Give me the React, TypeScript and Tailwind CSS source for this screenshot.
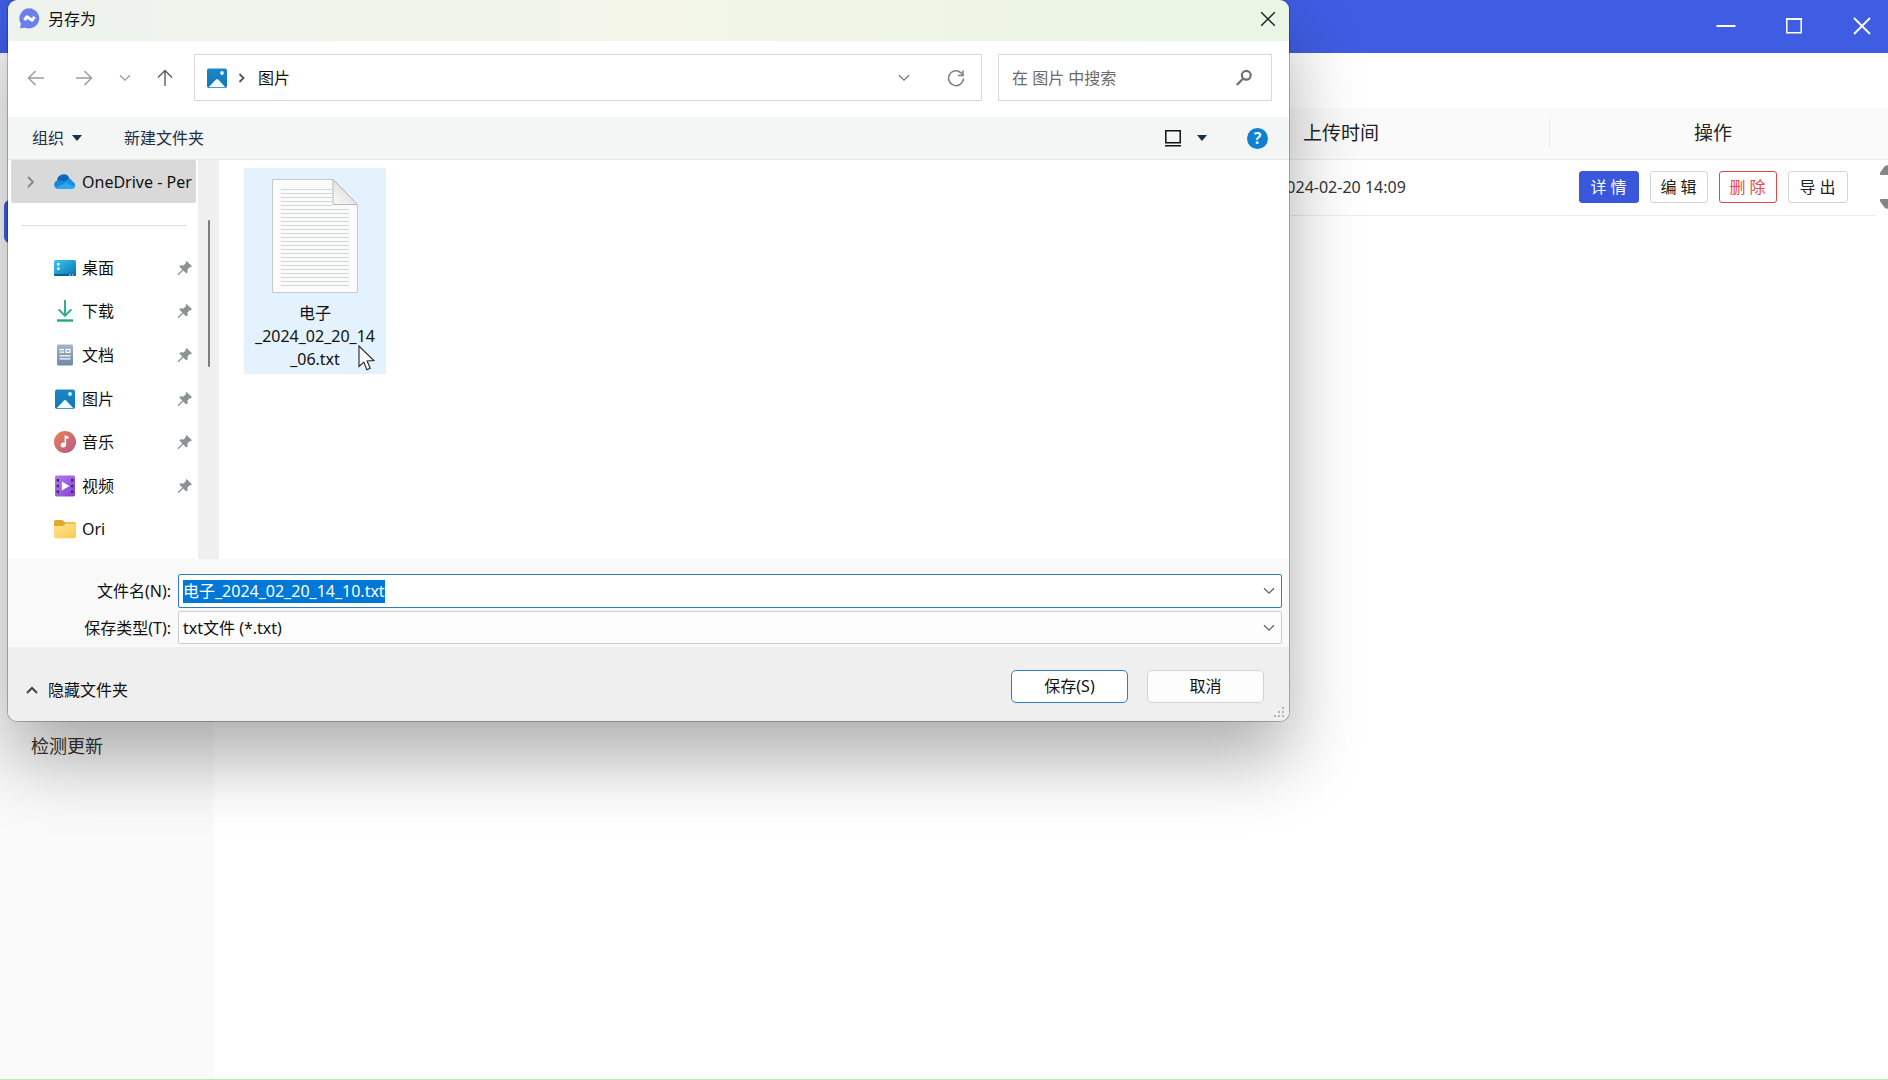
import { useEffect, useRef } from "react";
import type { ReactNode } from "react";

function DesktopIcon() {
  return (
    <svg aria-hidden width="22" height="22" viewBox="0 0 22 22">
      <defs>
        <linearGradient id="desktop" x1="0" y1="0" x2="1" y2="1">
          <stop offset="0" stopColor="#3cc8ec" />
          <stop offset="1" stopColor="#0c6fb4" />
        </linearGradient>
      </defs>
      <rect x="0" y="3" width="22" height="16" rx="1.5" fill="url(#desktop)" />
      <path d="M0 17h22v.8a1.4 1.4 0 0 1-1.4 1.2H1.4A1.4 1.4 0 0 1 0 17.8z" fill="#0f5f95" />
      <path d="M3 6h2.6v2.6H3zM3 10.4h2.6V13H3z" fill="#d9f6ff" />
      <path d="M15 17.4h1.6v1H15zM18 17.4h1.6v1H18z" fill="#d9f6ff" />
    </svg>
  );
}

function DownloadIcon() {
  return (
    <svg aria-hidden width="22" height="22" viewBox="0 0 22 22" fill="none" stroke="#2fae90" strokeWidth="2">
      <path d="M11 0v15.5M4.6 9.4L11 15.8l6.4-6.4" />
      <path d="M3 20.5h16" stroke="#23a884" strokeWidth="2.4" />
    </svg>
  );
}

function DocumentIcon() {
  return (
    <svg aria-hidden width="22" height="22" viewBox="0 0 22 22">
      <defs>
        <linearGradient id="document" x1="0" y1="0" x2="0" y2="1">
          <stop offset="0" stopColor="#a3b5cb" />
          <stop offset="1" stopColor="#7288a8" />
        </linearGradient>
      </defs>
      <rect x="3" y="0.5" width="16" height="21" rx="1.5" fill="url(#document)" />
      <path d="M5.5 5H10v1.3H5.5zM5.5 7.5H10v1.3H5.5zM5.5 11.2h11v1.3h-11zM5.5 14.2h11v1.3h-11z" fill="#fff" />
      <path d="M11.5 4.8h5v4.2h-5z" fill="#fff" />
      <path d="M12.7 6h2.6v1.8h-2.6z" fill="#8ea3bd" />
    </svg>
  );
}

function PictureIcon() {
  return (
    <svg aria-hidden width="22" height="22" viewBox="0 0 22 22">
      <defs>
        <linearGradient id="picture" x1="0" y1="0" x2="0" y2="1">
          <stop offset="0" stopColor="#1b86c6" />
          <stop offset="1" stopColor="#1278b8" />
        </linearGradient>
      </defs>
      <rect x="1" y="1.5" width="20" height="19.5" rx="2" fill="url(#picture)" />
      <path d="M2.6 20.2l7.4-7.6q1.1-1 2.2 0l7.2 7.6z" fill="#f2fbff" />
      <circle cx="16" cy="6" r="1.9" fill="#d8f1fc" />
    </svg>
  );
}

function MusicIcon() {
  return (
    <svg aria-hidden width="22" height="22" viewBox="0 0 22 22">
      <defs>
        <linearGradient id="music" x1="0" y1="0" x2="1" y2="1">
          <stop offset="0" stopColor="#ea8450" />
          <stop offset="1" stopColor="#b4588e" />
        </linearGradient>
      </defs>
      <circle cx="11" cy="11" r="11" fill="url(#music)" />
      <path d="M10.6 4.2l3.9 1.3v2.3l-2.4-.6v6.9a2.7 2.5 0 1 1-1.5-2.3z" fill="#fff" />
    </svg>
  );
}

function VideoIcon() {
  return (
    <svg aria-hidden width="22" height="22" viewBox="0 0 22 22">
      <defs>
        <linearGradient id="video" x1="0" y1="0" x2="1" y2="1">
          <stop offset="0" stopColor="#b07cf0" />
          <stop offset="1" stopColor="#8345cc" />
        </linearGradient>
      </defs>
      <rect x="1" y="0.5" width="20" height="21" rx="1.8" fill="url(#video)" />
      <path
        d="M2.6 4h2.4v2.4H2.6zM2.6 9.8h2.4v2.4H2.6zM2.6 15.6h2.4V18H2.6zM17 4h2.4v2.4H17zM17 9.8h2.4v2.4H17zM17 15.6h2.4V18H17z"
        fill="#4a2382"
      />
      <path d="M7.8 6.4v9.2l7.6-4.6z" fill="#fff" />
    </svg>
  );
}

function FolderIcon() {
  return (
    <svg aria-hidden width="22" height="22" viewBox="0 0 22 22">
      <defs>
        <linearGradient id="folder" x1="0" y1="0" x2="1" y2="1">
          <stop offset="0" stopColor="#ffe38c" />
          <stop offset="1" stopColor="#f9cc52" />
        </linearGradient>
      </defs>
      <path d="M0 3.6A1.6 1.6 0 0 1 1.6 2h6.2q.7 0 1.2.5L11 4.3h9.4A1.6 1.6 0 0 1 22 5.9V10H0z" fill="#dfa92c" />
      <path d="M0 8h8.6q.7 0 1.2-.5L11.4 5.6h9.2A1.4 1.4 0 0 1 22 7v11.6a1.6 1.6 0 0 1-1.6 1.6H1.6A1.6 1.6 0 0 1 0 18.6z" fill="url(#folder)" />
    </svg>
  );
}

function CloudIcon() {
  return (
    <svg aria-hidden width="22" height="22" viewBox="0 0 22 22">
      <path d="M3 9.5a6.5 6.5 0 0 1 12.6-1.9L10 13z" fill="#0f66b8" />
      <path d="M4.2 18A4.3 4.3 0 0 1 5 9.3q2.6-.5 4.6 1.3L18 17.2 14 18z" fill="#1a86d8" />
      <path d="M8.8 11.2l6-3.6a5 5 0 0 1 3.8 3A4 4 0 0 1 20.8 16L15 15z" fill="#1b90e0" />
      <path d="M4.2 18q-1.6 0-2.8-1.2l9.4-4.6q1.4-.8 2.8.1L21 16.6Q19.9 18 18.2 18z" fill="#2ba8ee" />
    </svg>
  );
}

function PinIcon() {
  return (
    <svg aria-hidden width="16" height="16" viewBox="0 0 16 16" fill="#8b9296">
      <path d="M9.6 1l5.4 5.3-1.5 1-.8-.1-2.2 2.3.2 2.8-1.4 1.3L6.2 10.5l-4.4 4.6-1-.1.1-1L5.4 9.6 2.3 6.5l1.3-1.3 2.9.2 2.3-2.2-.1-1z" />
    </svg>
  );
}

function AppLogo() {
  return (
    <svg aria-hidden width="21" height="21" viewBox="0 0 21 21">
      <path d="M10.5.3a10.100 10.100 0 1 1-4.300 19.400L1 20.300l.9-4.600A10.100 10.100 0 0 1 10.500.3z" fill="#6c80ec" />
      <path d="M5.400 12.200l2.400-3.400 5.400 3.400 2.400-3.400" fill="none" stroke="#fff" strokeWidth="3" strokeLinejoin="round" />
    </svg>
  );
}

function TextFileIcon() {
  const lines = Array.from({ length: 25 }, (_, index) => 10 + index * 4);

  return (
    <svg aria-hidden width="86" height="114" viewBox="0 0 86 114">
      <defs>
        <linearGradient id="fold" x1="0" y1="1" x2="1" y2="0">
          <stop offset="0" stopColor="#fbfbfb" />
          <stop offset="1" stopColor="#cfcfcf" />
        </linearGradient>
      </defs>
      <path d="M.5.5h60.5l24.5 25v88H.5z" fill="#fafbfa" stroke="#c3c8cb" />
      <g stroke="#d2d6d4">
        {lines.map((y) => (
          <path key={y} d={`M9 ${y}.5H${y < 28 ? 60 : 77}`} />
        ))}
      </g>
      <path d="M61 .5v25h24.5z" fill="url(#fold)" stroke="#b4b8ba" />
    </svg>
  );
}

function Chevron({ className }: { className?: string }) {
  return (
    <svg aria-hidden width="12" height="8" viewBox="0 0 12 8" fill="none" stroke="currentColor" strokeWidth="1.3" className={className}>
      <path d="M1 1.2l5 5 5-5" />
    </svg>
  );
}

function Triangle() {
  return (
    <svg aria-hidden width="10" height="6" viewBox="0 0 10 6" fill="#1c3047">
      <path d="M0 0h10L5 6z" />
    </svg>
  );
}

function Arrow({ d, tone }: { d: string; tone: string }) {
  return (
    <svg aria-hidden width="18" height="18" viewBox="0 0 18 18" fill="none" strokeWidth="1.4" className={tone}>
      <path d={d} stroke="currentColor" />
    </svg>
  );
}

const places: { label: string; icon: ReactNode; pinned: boolean }[] = [
  { label: "桌面", icon: <DesktopIcon />, pinned: true },
  { label: "下载", icon: <DownloadIcon />, pinned: true },
  { label: "文档", icon: <DocumentIcon />, pinned: true },
  { label: "图片", icon: <PictureIcon />, pinned: true },
  { label: "音乐", icon: <MusicIcon />, pinned: true },
  { label: "视频", icon: <VideoIcon />, pinned: true },
  { label: "Ori", icon: <FolderIcon />, pinned: false }
];

const rowActions = [
  { label: "详 情", style: "w-[60px] border-[#3a57dc] bg-[#3a57dc] text-white" },
  { label: "编 辑", style: "w-[58px] border-[#d4d4d4] bg-white text-[#222]" },
  { label: "删 除", style: "w-[58px] border-[#e0484c] bg-white text-[#e5484d]" },
  { label: "导 出", style: "w-[60px] border-[#d4d4d4] bg-white text-[#222]" }
];

function WindowHeader() {
  return (
    <header className="flex h-[53px] shrink-0 items-center justify-end gap-12 bg-[#3f5de3] pr-4 pb-[2px] text-white">
      <button type="button" aria-label="最小化">
        <svg aria-hidden width="20" height="20" viewBox="0 0 20 20" stroke="currentColor" strokeWidth="2">
          <path d="M.5 10h19" />
        </svg>
      </button>
      <button type="button" aria-label="最大化">
        <svg aria-hidden width="20" height="20" viewBox="0 0 20 20" fill="none" stroke="currentColor" strokeWidth="1.5">
          <path d="M2.8 2.8h14.4v14H2.8z" />
          <path d="M2 3h16" strokeWidth="2" />
        </svg>
      </button>
      <button type="button" aria-label="关闭">
        <svg aria-hidden width="20" height="20" viewBox="0 0 20 20" stroke="currentColor" strokeWidth="1.8">
          <path d="M2 2l16 16M18 2L2 18" />
        </svg>
      </button>
    </header>
  );
}

function AppSidebar() {
  return (
    <aside className="w-[214px] shrink-0 bg-[#fafafa] pt-[147px]">
      <div className="mx-1 h-[43px] rounded-md bg-[#3f5de3]" />
      <a href="#update" className="mx-1 mt-[482px] flex h-[43px] items-center pl-[27px] text-[18px] text-[#333]">
        检测更新
      </a>
    </aside>
  );
}

function RecordTable() {
  return (
    <main className="min-w-0 flex-1 pt-[55px]">
      <table className="w-full table-fixed border-collapse">
        <colgroup>
          <col />
          <col className="w-[417px]" />
          <col className="w-[326px]" />
          <col className="w-[12px]" />
        </colgroup>
        <thead>
          <tr className="h-[51px] border-b border-[#ececec] bg-[#fafafa] text-[19px] text-[#222]">
            <td />
            <th className="p-0 font-normal">
              <div className="flex h-[30px] items-center justify-center border-r border-[#ebebeb]">上传时间</div>
            </th>
            <th className="p-0 font-normal">操作</th>
            <td />
          </tr>
        </thead>
        <tbody>
          <tr className="h-[56px] text-[16px] text-[#333]">
            <td className="border-b border-[#ececec]" />
            <td className="border-b border-[#ececec] text-center">2024-02-20 14:09</td>
            <td className="border-b border-[#ececec] p-0">
              <div className="flex justify-center gap-[11px]">
                {rowActions.map((action) => (
                  <button key={action.label} type="button" className={`h-8 rounded-[3px] border text-[16px] ${action.style}`}>
                    {action.label}
                  </button>
                ))}
              </div>
            </td>
            <td className="overflow-hidden p-0 pl-1">
              <svg aria-hidden width="8" height="44" viewBox="0 0 8 44" fill="#858585">
                <path d="M0 9q-.2-1 .5-2L4.5 1.5Q5.500.3 8 .3V10H1Q.2 10 0 9zM0 35q-.2 1 .5 2l4 5.500q1 1.200 3.500 1.200V34H1q-.8 0-1 1z" />
              </svg>
            </td>
          </tr>
        </tbody>
      </table>
    </main>
  );
}

function AddressRow() {
  return (
    <div className="flex items-center bg-white pt-[13px] pr-[17px] pb-4 pl-[19px]">
      <div className="flex w-[167px] shrink-0 items-center">
        <button type="button" aria-label="后退">
          <Arrow d="M17 9H1.500M8.500 2L1.500 9l7 7" tone="text-[#9a9a9a]" />
        </button>
        <button type="button" aria-label="前进" className="ml-[30px]">
          <Arrow d="M1 9h15.500M9.500 2l7 7-7 7" tone="text-[#9a9a9a]" />
        </button>
        <button type="button" aria-label="最近浏览的位置" className="ml-[26px]">
          <Chevron className="text-[#9a9a9a]" />
        </button>
        <button type="button" aria-label="上移" className="ml-[25px]">
          <Arrow d="M9 17V1.500M2 8.500l7-7 7 7" tone="text-[#5c5c5c]" />
        </button>
      </div>
      <div className="flex h-[47px] min-w-0 flex-1 items-center border border-[#d9d9d9] pl-[11px]">
        <PictureIcon />
        <svg aria-hidden width="8" height="10" viewBox="0 0 8 10" fill="none" stroke="#555" strokeWidth="1.8" className="ml-[10px]">
          <path d="M1.500 1l4 4-4 4" />
        </svg>
        <button type="button" className="ml-3">
          图片
        </button>
        <button type="button" aria-label="以前的位置" className="mr-[37px] ml-auto">
          <Chevron className="text-[#777]" />
        </button>
        <button type="button" aria-label="刷新" className="mr-4">
          <svg aria-hidden width="18" height="18" viewBox="0 0 18 18" fill="none" stroke="#808080" strokeWidth="1.5">
            <path d="M15.900 6.500A7.400 7.400 0 1 0 16.400 9.500" />
            <path d="M16 1.500v5h-5" />
          </svg>
        </button>
      </div>
      <div className="ml-4 flex h-[47px] w-[274px] shrink-0 items-center border border-[#d9d9d9] pr-[18px] pl-[13px]">
        <input
          type="search"
          aria-label="搜索"
          placeholder="在 图片 中搜索"
          className="min-w-0 flex-1 outline-none placeholder:text-[#6b6b6b]"
        />
        <svg aria-hidden width="18" height="18" viewBox="0 0 18 18" fill="none" stroke="#707070" strokeWidth="2.2">
          <circle cx="11.300" cy="6.300" r="4.400" />
          <path d="M8 9.700L1.800 15.900" />
        </svg>
      </div>
    </div>
  );
}

function CommandBar() {
  return (
    <div className="flex h-[43px] items-center border-b border-[#e6eae9] bg-[#f4f6f6] pr-[21px] pl-6 text-[#1c3047]">
      <button type="button" className="flex items-center gap-2">
        组织
        <Triangle />
      </button>
      <button type="button" className="ml-[42px]">
        新建文件夹
      </button>
      <button type="button" aria-label="更改视图" className="ml-auto flex items-center gap-[15px]">
        <svg aria-hidden width="18" height="18" viewBox="0 0 18 18" fill="none" stroke="#111" strokeWidth="1.5">
          <path d="M1.800 1.800h14.400v12H1.800zM1 16.700h16" />
        </svg>
        <Triangle />
      </button>
      <button
        type="button"
        aria-label="获取帮助"
        className="ml-10 h-[21px] w-[21px] rounded-full bg-[#0f7fd0] text-[16px] leading-[21px] font-bold text-[#e6f6ff]"
      >
        ?
      </button>
    </div>
  );
}

function PlacesPane() {
  return (
    <nav className="flex w-[190px] shrink-0 flex-col bg-white">
      <a href="#onedrive" className="mr-[2px] ml-[3px] flex h-[43px] items-center rounded-[2px] bg-[#d9d9d9] pl-4 whitespace-nowrap">
        <svg aria-hidden width="8" height="12" viewBox="0 0 8 12" fill="none" stroke="#858585" strokeWidth="1.8" className="shrink-0">
          <path d="M1 1l5 5-5 5" />
        </svg>
        <span className="mr-[6px] ml-[19px] shrink-0">
          <CloudIcon />
        </span>
        OneDrive - Per
      </a>
      <hr className="mt-[22px] mr-3 ml-[14px] border-[#dcdcdc]" />
      <ul className="mt-5 flex flex-1 flex-col pb-2">
        {places.map((place) => (
          <li key={place.label} className="flex flex-1">
            <a href="#place" className="flex flex-1 items-center gap-[6px] pr-[5px] pl-[46px]">
              {place.icon}
              <span className="flex-1">{place.label}</span>
              {place.pinned ? <PinIcon /> : null}
            </a>
          </li>
        ))}
      </ul>
    </nav>
  );
}

function FileArea() {
  return (
    <div className="flex h-[399px]">
      <PlacesPane />
      <div className="flex w-[21px] shrink-0 justify-center bg-[#efefef] pt-[60px]">
        <div className="h-[147px] w-[2px] rounded-full bg-[#7c7c7c]" />
      </div>
      <div className="relative flex-1 bg-white pt-2 pl-[25px]">
        <button type="button" className="flex h-[206px] w-[142px] flex-col items-center bg-[#e4f2fd] pt-[11px]">
          <TextFileIcon />
          <span className="mt-[9px] leading-[23px]">
            电子
            <br />
            _2024_02_20_14
            <br />
            _06.txt
          </span>
        </button>
        <svg aria-hidden width="18" height="27" viewBox="0 0 18 27" className="absolute top-[185px] left-[139px]">
          <path d="M1 1v20.500l4.800-4.400 3.100 7.600 3.300-1.400-3.100-7.400 6.700-.3z" fill="#fff" stroke="#222" strokeWidth="1.1" />
        </svg>
      </div>
    </div>
  );
}

function FileFields() {
  const nameRef = useRef<HTMLInputElement>(null);

  useEffect(() => {
    nameRef.current?.focus();
    nameRef.current?.select();
  }, []);

  return (
    <div className="flex flex-col gap-[3px] bg-[#f9f9f9] pt-[15px] pr-[7px] pb-[3px]">
      <div className="flex items-center">
        <label htmlFor="file-name" className="w-[163px] text-right">
          文件名(N):
        </label>
        <div className="ml-[7px] flex h-[34px] flex-1 items-center rounded-[2px] border border-[#2b7fc0] bg-white pr-[6px] pl-1">
          <input
            id="file-name"
            ref={nameRef}
            defaultValue="电子_2024_02_20_14_10.txt"
            className="h-[23px] min-w-0 flex-1 leading-[23px] outline-none selection:bg-[#0078d7] selection:text-white"
          />
          <button type="button" aria-label="显示以前的文件名">
            <Chevron className="text-[#666]" />
          </button>
        </div>
      </div>
      <div className="flex items-center">
        <label htmlFor="file-type" className="w-[163px] text-right">
          保存类型(T):
        </label>
        <div className="ml-[7px] grid h-[33px] flex-1 items-center rounded-[2px] border border-[#cdcdcd] bg-[#fdfdfd]">
          <select id="file-type" className="col-start-1 row-start-1 h-full appearance-none pl-1 outline-none">
            <option>txt文件 (*.txt)</option>
          </select>
          <Chevron className="pointer-events-none col-start-1 row-start-1 mr-[6px] justify-self-end text-[#666]" />
        </div>
      </div>
    </div>
  );
}

function DialogFooter() {
  return (
    <div className="relative flex h-[74px] items-center bg-[#efefef] pr-[25px] pl-[18px]">
      <button type="button" className="flex items-center gap-[10px] pt-3">
        <svg aria-hidden width="12" height="8" viewBox="0 0 12 8" fill="none" stroke="#444" strokeWidth="2">
          <path d="M1 7l5-5 5 5" />
        </svg>
        隐藏文件夹
      </button>
      <div className="ml-auto flex gap-[19px] pt-1">
        <button type="submit" className="h-[33px] w-[117px] rounded-[5px] border border-[#2b7fc0] bg-white">
          保存(S)
        </button>
        <button type="button" className="h-[33px] w-[117px] rounded-[5px] border border-[#d2d2d2] bg-[#fdfdfd]">
          取消
        </button>
      </div>
      <svg aria-hidden width="12" height="12" viewBox="0 0 12 12" fill="#b5b5b5" className="absolute right-1 bottom-[2px]">
        <path d="M9 0h2v2H9zM9 4h2v2H9zM5 4h2v2H5zM9 8h2v2H9zM5 8h2v2H5zM1 8h2v2H1z" />
      </svg>
    </div>
  );
}

function SaveDialog() {
  return (
    <form
      role="dialog"
      aria-label="另存为"
      className="absolute top-0 right-[599px] left-2 overflow-hidden rounded-[9px] text-[16px] leading-[22px] text-[#111] shadow-[0_0_0_1px_rgba(0,0,0,0.25),0_38px_72px_rgba(0,0,0,0.32)]"
    >
      <div className="flex h-[41px] items-center bg-linear-to-r from-[#eef3ee] via-[#f3f5e9] to-[#e9f5e5] pr-[13px] pb-1 pl-[11px]">
        <AppLogo />
        <h1 className="ml-2">另存为</h1>
        <button type="button" aria-label="关闭" className="ml-auto">
          <svg aria-hidden width="16" height="16" viewBox="0 0 16 16" stroke="#222" strokeWidth="1.5">
            <path d="M1.200 1.200l13.600 13.600M14.800 1.200L1.200 14.800" />
          </svg>
        </button>
      </div>
      <AddressRow />
      <CommandBar />
      <FileArea />
      <FileFields />
      <DialogFooter />
    </form>
  );
}

export default function App() {
  return (
    <div className="relative flex min-h-screen flex-col overflow-hidden border-b border-[#b9edb4] bg-white font-['Noto_Sans','Noto_Sans_CJK_SC',sans-serif]">
      <WindowHeader />
      <div className="flex flex-1">
        <AppSidebar />
        <RecordTable />
      </div>
      <SaveDialog />
    </div>
  );
}
